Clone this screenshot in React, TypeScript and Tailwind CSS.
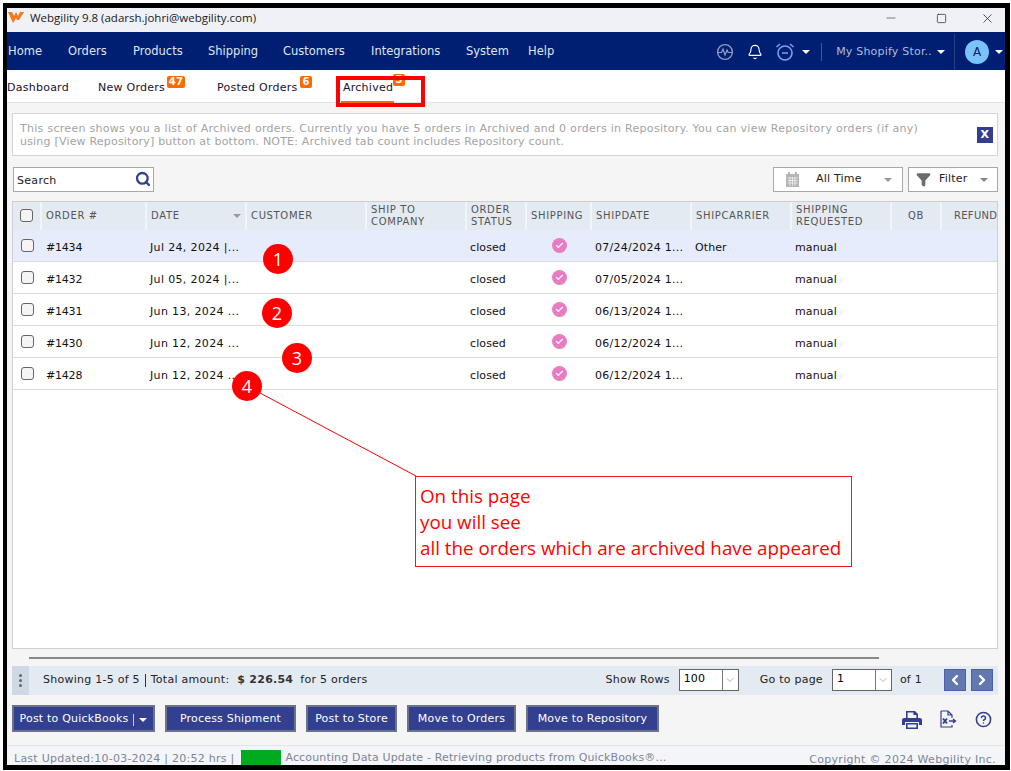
import { ChevronDown, ChevronLeft, ChevronRight, Search, Filter, Bell, Minus, Square, X, CircleHelp, Check } from 'lucide-react';

const verdana = 'font-["DejaVu_Sans",sans-serif]';

const navItems = [
  { label: 'Home', width: 'w-[60px]' },
  { label: 'Orders', width: 'w-[65px]' },
  { label: 'Products', width: 'w-[75px]' },
  { label: 'Shipping', width: 'w-[75px]' },
  { label: 'Customers', width: 'w-[88px]' },
  { label: 'Integrations', width: 'w-[95px]' },
  { label: 'System', width: 'w-[62px]' },
  { label: 'Help', width: 'w-[40px]' },
];

const columns = 'grid-cols-[29px_105px_100px_120px_100px_60px_65px_100px_100px_100px_50px_1fr]';

const headers = [
  { label: 'ORDER #', wrap: false },
  { label: 'DATE', sorted: true },
  { label: 'CUSTOMER' },
  { label: 'SHIP TO COMPANY', wrap: true },
  { label: 'ORDER STATUS', wrap: true },
  { label: 'SHIPPING' },
  { label: 'SHIPDATE' },
  { label: 'SHIPCARRIER' },
  { label: 'SHIPPING REQUESTED', wrap: true },
  { label: 'QB', center: true },
  { label: 'REFUND', clip: true },
];

const orders = [
  { id: '#1434', date: 'Jul 24, 2024 |...', ship: '07/24/2024 1...', carrier: 'Other' },
  { id: '#1432', date: 'Jul 05, 2024 |...', ship: '07/05/2024 1...', carrier: '' },
  { id: '#1431', date: 'Jun 13, 2024 ...', ship: '06/13/2024 1...', carrier: '' },
  { id: '#1430', date: 'Jun 12, 2024 ...', ship: '06/12/2024 1...', carrier: '' },
  { id: '#1428', date: 'Jun 12, 2024 ...', ship: '06/12/2024 1...', carrier: '' },
];

const markers = [
  { n: 1, pos: 'left-[263px] top-[244px]' },
  { n: 2, pos: 'left-[262px] top-[298px]' },
  { n: 3, pos: 'left-[282px] top-[343px]' },
  { n: 4, pos: 'left-[232px] top-[371px]' },
];

const Caret = ({ className = '' }: { className?: string }) => (
  <span className={`inline-block h-0 w-0 border-x-[4px] border-t-[4px] border-x-transparent ${className}`} />
);

function Badge({ children, className = '' }: { children: React.ReactNode; className?: string }) {
  return (
    <span className={`absolute flex h-[12px] items-center justify-center rounded-[2px] bg-[#ff6a00] text-[10px] font-bold leading-none text-white ${className}`}>
      {children}
    </span>
  );
}

function ActionButton({ children, className = '' }: { children: React.ReactNode; className?: string }) {
  return (
    <button className={`flex h-[27px] items-center justify-center border-2 border-[#6b7387] bg-[#32408f] pt-[2px] text-[11px] tracking-[0.2px] text-white ${className}`}>
      {children}
    </button>
  );
}

function PageSelect({ value, className = '' }: { value: string; className?: string }) {
  return (
    <div className={`-mt-[2px] flex h-[22px] w-[60px] items-stretch border border-[#666] bg-white text-[11px] text-black ${className}`}>
      <span className="flex-1 pl-[4px] leading-[18px]">{value}</span>
      <span className="flex w-[16px] items-center justify-center border-l border-[#777]">
        <ChevronDown className="h-[12px] w-[12px] text-[#666]" strokeWidth={1} />
      </span>
    </div>
  );
}

export default function App() {
  return (
    <div className={`relative h-[771px] w-[1011px] overflow-hidden bg-white pb-[1px] pl-[3px] pr-[1px] pt-[3px] ${verdana}`}>
      <div className="flex h-full flex-col border-y-[5px] border-l-[4px] border-r-[5px] border-black bg-[#f5f5f5]">
        {/* Title bar */}
        <div className="flex h-[24px] shrink-0 items-center justify-between bg-[#f0f1f6] pb-[4px] pl-[1px] pr-[10px]">
          <div className='flex items-center gap-[6px] font-["Open_Sans",sans-serif] text-[11.5px] text-[#1a1a1a]'>
            <svg width="16" height="12" viewBox="0 0 16 12">
              <path d="M0 0h4l2 4 2-4 2 4 2-4h4l-5 8h-2L8 6l-1 2L5 11z" fill="#f47a1f" />
            </svg>
            <span>Webgility 9.8 (adarsh.johri@webgility.com)</span>
          </div>
          <div className="flex items-center text-[#222]">
            <Minus className="h-[14px] w-[18px]" strokeWidth={1} />
            <Square className="ml-[36px] h-[11px] w-[11px]" strokeWidth={1.5} />
            <X className="ml-[33px] h-[15px] w-[15px]" strokeWidth={1.2} />
          </div>
        </div>

        {/* Main nav */}
        <div className="flex h-[38px] shrink-0 items-center bg-[#001f73] pt-[2px] text-[#dfe6f5]">
          <div className="flex flex-1 pl-[1px] text-[11.5px]">
            {navItems.map((item) => (
              <span key={item.label} className={item.width}>{item.label}</span>
            ))}
          </div>
          <div className="flex h-full items-center">
            <svg width="18" height="18" viewBox="0 0 18 18" fill="none" stroke="#8f9ac0" strokeWidth="1.4" className="mr-[13px]">
              <circle cx="9" cy="9" r="7.4" />
              <path d="M2 9.5h3.5L7 6l2 6 2-5 1.2 2.5H16" strokeWidth="1.2" />
            </svg>
            <Bell className="mr-[12px] h-[16px] w-[16px] text-white" strokeWidth={1.7} />
            <svg width="20" height="20" viewBox="0 0 20 20" fill="none" stroke="#7f9ff0" strokeWidth="1.6" className="mr-[7px]">
              <circle cx="10" cy="11" r="7" />
              <path d="M7 11h6M1.5 5 5 2M18.5 5 15 2" />
            </svg>
            <Caret className="mr-[11px] border-t-white" />
            <span className="h-[18px] w-px bg-[#45588f]" />
            <span className="ml-[14px] mr-[5px] text-[11px] tracking-[0.2px] text-[#aebbd8]">My Shopify Stor..</span>
            <Caret className="mr-[9px] border-t-white" />
            <span className="h-full w-px bg-[#2a3f80]" />
            <span className="ml-[10px] flex h-[24px] w-[24px] items-center justify-center rounded-full bg-[#79c3fa] text-[12px] text-[#12205a]">A</span>
            <Caret className="ml-[6px] mr-[2px] border-t-white" />
          </div>
        </div>

        {/* Tabs */}
        <div className="flex h-[33px] shrink-0 border-b border-[#e2e2e2] bg-white text-[11px] text-[#1c1030]">
          <div className="flex items-center pt-[2px] leading-none tracking-[0.25px]">
            <span className="w-[91px]">Dashboard</span>
            <span className="relative w-[119px]">
              New Orders
              <Badge className="left-[69px] top-[-6px] w-[18px]">47</Badge>
            </span>
            <span className="relative w-[124px]">
              Posted Orders
              <Badge className="left-[83px] top-[-6px] w-[12px]">6</Badge>
            </span>
            <span className="relative -mt-[2px] flex h-[33px] w-[53px] items-center border-b-2 border-[#ff6a00] pl-[2px] pt-[4px]">
              Archived
              <Badge className="left-[52px] top-[4px] w-[12px]">5</Badge>
            </span>
          </div>
        </div>

        {/* Page body */}
        <div className="flex min-h-0 flex-1 flex-col px-[5px] pt-[10px]">
          <div className="mr-[2px] flex h-[43px] shrink-0 items-center justify-between border border-[#d4d4d4] bg-white pl-[7px] pr-[4px] text-[11px] leading-[13px] tracking-[0.29px] text-[#a3a3a3]">
            <p>
              This screen shows you a list of Archived orders. Currently you have 5 orders in Archived and 0 orders in Repository. You can view Repository orders (if any)
              <br />
              <span className="tracking-[0.2px]">using [View Repository] button at bottom. NOTE: Archived tab count includes Repository count.</span>
            </p>
            <span className="flex h-[16px] w-[16px] shrink-0 items-center justify-center bg-[#323f8f] text-[11px] font-bold text-white">X</span>
          </div>

          {/* Search and filters */}
          <div className="mr-[2px] mt-[11px] flex shrink-0 items-start justify-between pl-px">
            <div className="flex h-[25px] w-[141px] items-center justify-between border border-[#a8a8a8] bg-white pl-[3px] pr-[2px] pt-[3px] text-[11px] tracking-[0.3px] text-[#222]">
              Search
              <Search className="-mt-[4px] h-[16px] w-[16px] text-[#32408f]" strokeWidth={3.4} />
            </div>
            <div className="flex gap-[5px]">
              <div className="flex h-[25px] w-[130px] items-center border border-[#a8a8a8] bg-white pl-[11px] pr-[10px] text-[11px] tracking-[0.2px] text-[#222]">
                <svg width="15" height="15" viewBox="0 0 15 15" fill="#b5b5b5">
                  <path d="M1 2h2V0h2v2h5V0h2v2h2v13H1z" />
                  <path d="M2.5 6h10M2.5 8.5h10M2.5 11h10M5 5v9M7.5 5v9M10 5v9" stroke="#fff" strokeWidth=".6" />
                </svg>
                <span className="ml-[16px] flex-1">All Time</span>
                <Caret className="border-t-[#999]" />
              </div>
              <div className="flex h-[25px] w-[90px] items-center border border-[#a8a8a8] bg-white pl-[7px] pr-[9px] text-[11px] tracking-[0.2px] text-[#222]">
                <Filter className="h-[15px] w-[15px] fill-[#6b6b6b] text-[#6b6b6b]" />
                <span className="ml-[8px] flex-1">Filter</span>
                <Caret className="border-t-[#888]" />
              </div>
            </div>
          </div>

          {/* Orders table */}
          <div className="mr-[2px] mt-[9px] flex min-h-0 flex-1 flex-col overflow-hidden border border-[#cfcfcf] bg-white">
            <div className={`grid h-[28px] shrink-0 ${columns} bg-[#e3eaf1] text-[10px] leading-[12px] tracking-[0.65px] text-[#555]`}>
              <div className="flex items-center justify-center border-r-2 border-[#f2f5f8] pb-[2px]">
                <span className="h-[13px] w-[13px] rounded-[3px] border border-[#666] bg-[#f4f4f4]" />
              </div>
              {headers.map((h) => (
                <div
                  key={h.label}
                  className={`relative flex items-center whitespace-nowrap border-r-2 border-[#f2f5f8] last:border-r-0 ${h.center ? 'justify-center' : h.clip ? 'pl-[12px] tracking-[0.3px]' : 'pl-[4px]'}`}
                >
                  <span className={h.wrap ? 'w-[85%] whitespace-normal' : ''}>{h.label}</span>
                  {h.sorted && <Caret className="absolute right-[4px] top-[12px] border-t-[#999]" />}
                </div>
              ))}
            </div>
            {orders.map((o, i) => (
              <div
                key={o.id}
                className={`grid h-[32px] shrink-0 ${columns} items-center border-b border-[#dcdcdc] pt-[2px] text-[11px] tracking-[0.1px] text-[#111] ${i === 0 ? 'bg-[#e6ecfc]' : 'bg-white'}`}
              >
                <div className="flex justify-center pb-[2px]">
                  <span className="h-[13px] w-[13px] rounded-[3px] border border-[#666] bg-[#f4f4f4]" />
                </div>
                <span className="pl-[4px] pt-[4px] tracking-[-0.2px]">{o.id}</span>
                <span className="truncate pl-[3px] pt-[4px] tracking-[0.35px]">{o.date}</span>
                <span />
                <span />
                <span className="pl-[3px] pt-[4px]">closed</span>
                <span className="flex justify-center pb-[2px]">
                  <span className="flex h-[15px] w-[15px] items-center justify-center rounded-full bg-[#e87cc0]">
                    <Check className="h-[9px] w-[9px] text-white" strokeWidth={3} />
                  </span>
                </span>
                <span className="pl-[3px] pt-[4px] tracking-[0.25px]">{o.ship}</span>
                <span className="pl-[3px] pt-[4px]">{o.carrier}</span>
                <span className="pl-[3px] pt-[4px]">manual</span>
                <span />
                <span />
              </div>
            ))}
          </div>

          {/* Horizontal scrollbar */}
          <div className="flex h-[17px] shrink-0 items-center pl-[17px]">
            <span className="h-[2px] w-[850px] bg-[#888]" />
          </div>

          {/* Pager */}
          <div className="mr-[2px] flex h-[29px] shrink-0 items-center bg-[#e3eaf1] pr-[5px] text-[11px] tracking-[0.25px] text-[#222]">
            <span className="flex h-full w-[17px] flex-col items-center justify-center gap-[2px] bg-[#cfd9e4]">
              <span className="h-[3px] w-[3px] rounded-full bg-[#666]" />
              <span className="h-[3px] w-[3px] rounded-full bg-[#666]" />
              <span className="h-[3px] w-[3px] rounded-full bg-[#666]" />
            </span>
            <span className="ml-[14px]">Showing 1-5 of 5</span>
            <span className="mx-[5px] h-[13px] w-px bg-[#333]" />
            <span>Total amount:</span>
            <span className="ml-[8px] font-bold text-[#333]">$ 226.54</span>
            <span className="ml-[7px]">for 5 orders</span>
            <span className="ml-auto">Show Rows</span>
            <PageSelect value="100" className="ml-[9px]" />
            <span className="ml-[21px]">Go to page</span>
            <PageSelect value="1" className="ml-[9px]" />
            <span className="ml-[8px]">of 1</span>
            <span className="-mt-[2px] ml-[22px] flex h-[22px] w-[22px] items-center justify-center border border-[#4f5ea8] bg-[#6478b0]">
              <ChevronLeft className="h-[16px] w-[16px] text-white" strokeWidth={3.5} />
            </span>
            <span className="-mt-[2px] ml-[5px] flex h-[22px] w-[22px] items-center justify-center border border-[#4f5ea8] bg-[#6478b0]">
              <ChevronRight className="h-[16px] w-[16px] text-white" strokeWidth={3.5} />
            </span>
          </div>

          {/* Action buttons */}
          <div className="mr-[2px] mt-[10px] flex h-[27px] shrink-0 items-center">
            <ActionButton className="w-[143px]">
              Post to QuickBooks
              <span className="mx-[5px] h-[12px] w-px bg-[#c5cbe6]" />
              <Caret className="border-t-white" />
            </ActionButton>
            <ActionButton className="ml-[10px] w-[131px]">Process Shipment</ActionButton>
            <ActionButton className="ml-[10px] w-[91px]">Post to Store</ActionButton>
            <ActionButton className="ml-[10px] w-[109px]">Move to Orders</ActionButton>
            <ActionButton className="ml-[10px] w-[133px]">Move to Repository</ActionButton>
            <div className="ml-auto flex items-center pt-[1px] text-[#32408f]">
              <svg width="20" height="19" viewBox="0 0 20 19" fill="#32408f">
                <path d="M4 8V1h9l3 3v4h-1.6V5h-3V2.6H5.6V8z" />
                <path d="M2 8h16a2 2 0 0 1 2 2v5h-3v-3H3v3H0v-5a2 2 0 0 1 2-2z" />
                <path d="M4 13h12v6H4zm1.6 1.6v2.8h8.8v-2.8z" />
              </svg>
              <svg width="18" height="19" viewBox="0 0 18 19" fill="none" stroke="#32408f" strokeWidth="1.2" className="ml-[17px]">
                <path d="M2 1h7l4 4v3M2 1v16h11v-2M9 1v4h4" />
                <path d="M4 8.5l4 5M8 8.5l-4 5" strokeWidth="2" />
                <path d="M10 11h6M14 9l2.5 2-2.5 2" strokeWidth="1.4" />
              </svg>
              <CircleHelp className="ml-[18px] mr-[6px] h-[17px] w-[17px]" strokeWidth={2.2} />
            </div>
          </div>

          {/* Status bar */}
          <div className="-mx-[5px] mt-[13px] flex h-[20px] shrink-0 items-start overflow-hidden border-t border-[#e6e6e6] bg-[#f4f5f8] pl-[7px] pr-[9px] text-[11px] text-[#7d8597]">
            <span className="mt-[5px] tracking-[0.25px]">Last Updated:10-03-2024 | 20:52 hrs |</span>
            <span className="ml-[7px] mt-[4px] h-[20px] w-[40px] bg-[#00ab20]" />
            <span className="ml-[4px] mt-[4px] tracking-[0.15px]">Accounting Data Update - Retrieving products from QuickBooks®...</span>
            <span className="ml-auto mt-[6px] tracking-[0.3px]">Copyright © 2024 Webgility Inc.</span>
          </div>
        </div>
      </div>

      {/* Annotations drawn over the screenshot */}
      <div className="absolute left-[336px] top-[76px] h-[31px] w-[89px] border-[4px] border-[#ff0000]" />
      {markers.map((m) => (
        <span
          key={m.n}
          className={`absolute flex h-[30px] w-[30px] items-center justify-center rounded-full bg-[#ff0000] font-["Open_Sans",sans-serif] text-[18px] text-white ${m.pos}`}
        >
          {m.n}
        </span>
      ))}
      <svg className="pointer-events-none absolute left-0 top-0" width="1011" height="771" fill="none">
        <path d="M260 393 416 476" stroke="#ff0000" strokeWidth="1" />
      </svg>
      <div className='absolute left-[415px] top-[476px] h-[91px] w-[437px] border border-[#e02020] bg-white pl-[4px] pt-[6px] font-["Open_Sans",sans-serif] text-[18.8px] leading-[26px] text-[#ff0000]'>
        <p>On this page</p>
        <p>you will see</p>
        <p>all the orders which are archived have appeared</p>
      </div>
    </div>
  );
}
